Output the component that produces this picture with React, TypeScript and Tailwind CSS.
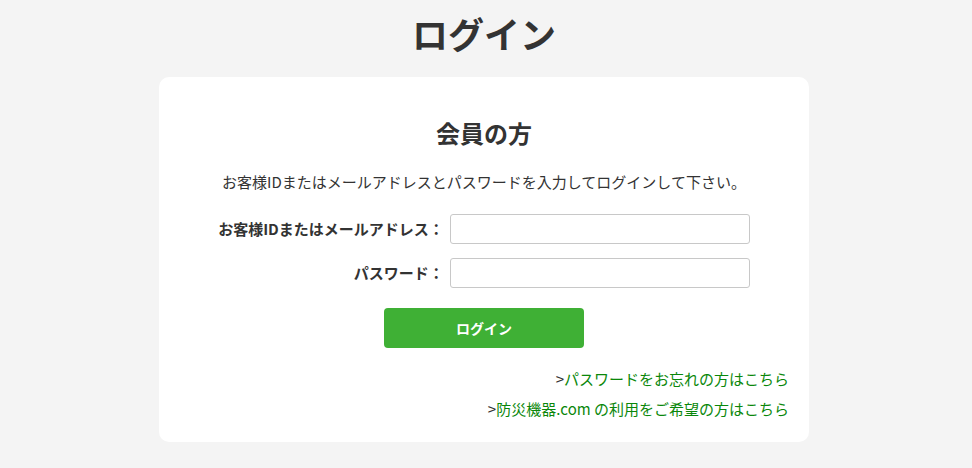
export default function App() {
  return (
    <div
      className="min-h-screen bg-[#f4f4f4] text-[#333] pt-[6px] pr-[4px]"
      style={{ fontFamily: '"Noto Sans CJK JP", "Noto Sans", sans-serif' }}
    >
      <h1 className="text-center text-[36px] font-bold leading-[54px] mb-[17px]">ログイン</h1>

      <div className="mx-auto w-[650px] bg-white rounded-[10px] pt-[38px] pb-[18px] px-[20px]">
        <h2 className="text-center text-[24px] font-bold leading-[36px]">会員の方</h2>
        <p className="text-center text-[15px] leading-[24px] mt-[19px]">
          お客様IDまたはメールアドレスとパスワードを入力してログインして下さい。
        </p>

        <form className="mt-[20px]" onSubmit={(e) => e.preventDefault()}>
          <div className="grid grid-cols-[auto_300px] justify-center items-center gap-x-[6px] gap-y-[14px]">
            <label className="text-right text-[15px] font-bold">お客様IDまたはメールアドレス：</label>
            <input type="text" className="h-[30px] border border-[#c8c8c8] rounded-[3px] px-2 outline-none" />
            <label className="text-right text-[15px] font-bold">パスワード：</label>
            <input type="password" className="h-[30px] border border-[#c8c8c8] rounded-[3px] px-2 outline-none" />
          </div>

          <div className="flex justify-center mt-[20px]">
            <button
              type="submit"
              className="w-[200px] h-[40px] rounded-[4px] bg-[#3fb035] text-white text-[14px] font-bold"
            >
              ログイン
            </button>
          </div>
        </form>

        <div className="mt-[16px] text-right text-[15px] leading-[30px]">
          <div>
            &gt;<a href="#" className="text-[#0a870a]">パスワードをお忘れの方はこちら</a>
          </div>
          <div>
            &gt;<a href="#" className="text-[#0a870a]">防災機器.com の利用をご希望の方はこちら</a>
          </div>
        </div>
      </div>
    </div>
  );
}
